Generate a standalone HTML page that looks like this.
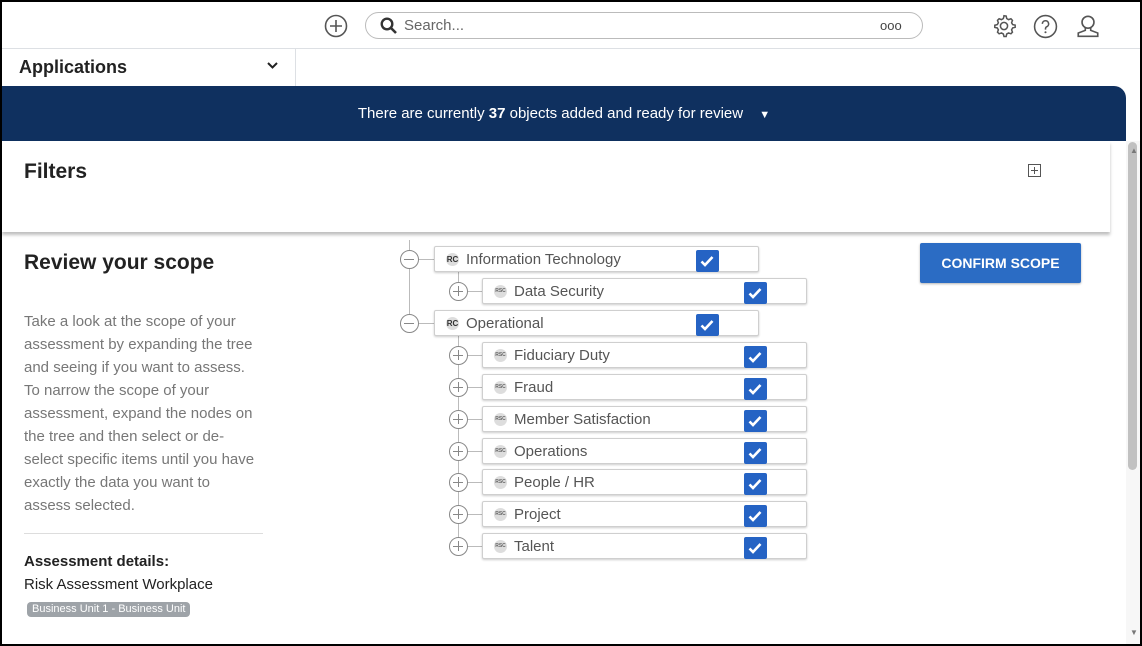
<!DOCTYPE html>
<html><head><style>
*{box-sizing:border-box;margin:0;padding:0}
body{width:1142px;height:646px;overflow:hidden;font-family:"Liberation Sans",sans-serif;background:#fff;position:relative}
.frame{position:absolute;inset:0;border:2px solid #000;pointer-events:none;z-index:10}
.abs{position:absolute}
.top{left:0;top:0;width:1142px;height:49px;border-bottom:1px solid #dde0e4}
.search{left:365px;top:12px;width:558px;height:27px;border:1px solid #bbb;border-radius:14px}
.apps{left:0;top:49px;width:296px;height:37px;border-right:1px solid #dde0e4}
.banner{left:2px;top:86px;width:1124px;height:55px;background:#0f305f;border-top-right-radius:12px;color:#fff;font-size:15px;text-align:center;line-height:55px}
.filters{left:2px;top:141px;width:1108px;height:91px;background:#fff;box-shadow:0 3px 3px rgba(0,0,0,.25)}
.sb{left:1126px;top:141px;width:14px;height:503px;background:#f7f7f7}
.thumb{left:1128px;top:142px;width:9px;height:328px;background:#c1c1c1;border-radius:5px}
.box{position:absolute;height:26px;border:1px solid #cfcfcf;border-radius:2px;background:#fff;box-shadow:0 1px 2px rgba(0,0,0,.2);font-size:15px;color:#555;line-height:25px}
.ic{position:absolute;top:6px;left:11px;width:13px;height:13px;border-radius:50%;background:#ddd;font-size:5px;color:#666;text-align:center;line-height:13px;font-weight:bold}
.ic.rc{font-size:8px;color:#333}
.lbl{position:absolute;left:31px;top:0}
.cb{position:absolute;top:3px;width:23px;height:22px;background:#2563c4;border-radius:2px}
.cb svg{position:absolute;left:4px;top:5px}
.circ{position:absolute;width:19px;height:19px;border:1.5px solid #888;border-radius:50%;background:#fff}
.circ:before{content:"";position:absolute;left:3px;top:7.5px;width:10px;height:1.5px;background:#888}
.circ.p:after{content:"";position:absolute;left:7.5px;top:3px;width:1.5px;height:10px;background:#888}
.ln{position:absolute;background:#bbb}
.p1{font-size:15px;color:#777;line-height:23px}
</style></head><body>
<div class="frame"></div>
<div class="abs top"></div>
<svg class="abs" style="left:324px;top:14px" width="24" height="24" viewBox="0 0 24 24"><circle cx="12" cy="12" r="10.5" fill="none" stroke="#555" stroke-width="1.6"/><path d="M12 6v12M6 12h12" stroke="#555" stroke-width="1.6"/></svg>
<div class="abs search"></div>
<svg class="abs" style="left:380px;top:17px" width="18" height="18" viewBox="0 0 18 18"><circle cx="7" cy="7" r="5.3" fill="none" stroke="#333" stroke-width="2.4"/><path d="M11 11l5 5" stroke="#333" stroke-width="2.6"/></svg>
<div class="abs" style="left:404px;top:17px;font-size:15px;color:#666">Search...</div>
<div class="abs" style="left:880px;top:18px;font-size:13px;color:#444">ooo</div>
<svg class="abs" style="left:991px;top:13px" width="26" height="26" viewBox="0 0 24 24"><path d="M12 2.5l2 .3.5 2.3 1.7 1 2.2-.8 1.4 1.5-.8 2.2 1 1.7 2.3.5v2l-2.3.6-1 1.7.8 2.2-1.4 1.5-2.2-.8-1.7 1-.5 2.300h-2l-.6-2.3-1.7-1-2.2.8-1.5-1.5.8-2.2-1-1.7-2.3-.5v-2l2.3-.6 1-1.7-.8-2.2 1.5-1.5 2.2.8 1.7-1 .6-2.3z" fill="none" stroke="#555" stroke-width="1.4"/><circle cx="12" cy="12" r="3.3" fill="none" stroke="#555" stroke-width="1.4"/></svg>
<svg class="abs" style="left:1033px;top:14px" width="25" height="25" viewBox="0 0 24 24"><circle cx="12" cy="12" r="10.5" fill="none" stroke="#555" stroke-width="1.5"/><path d="M9 9.5a3 3 0 1 1 4 2.8c-.8.4-1 1-1 2v.7" fill="none" stroke="#555" stroke-width="1.5"/><circle cx="12" cy="17.5" r="1" fill="#555"/></svg>
<svg class="abs" style="left:1075px;top:13px" width="26" height="26" viewBox="0 0 24 24"><circle cx="12" cy="8.5" r="5.5" fill="none" stroke="#555" stroke-width="1.5"/><path d="M9.5 13.5v2.5L3 18.5v3h18v-3l-6.5-2.5v-2.5" fill="none" stroke="#555" stroke-width="1.5"/></svg>
<div class="abs apps"></div>
<div class="abs" style="left:19px;top:57px;font-size:18px;font-weight:bold;color:#222">Applications</div>
<svg class="abs" style="left:266px;top:61px" width="13" height="10" viewBox="0 0 13 10"><path d="M2 2l4.5 4.5L11 2" fill="none" stroke="#222" stroke-width="2"/></svg>
<div class="abs banner">There are currently <b>37</b> objects added and ready for review <span style="font-size:11px;margin-left:12px">▼</span></div>
<div class="abs filters"></div>
<div class="abs" style="left:24px;top:160px;font-size:21px;font-weight:bold;color:#222">Filters</div>
<svg class="abs" style="left:1028px;top:164px" width="13" height="13" viewBox="0 0 13 13"><rect x=".5" y=".5" width="12" height="12" fill="none" stroke="#555"/><path d="M6.5 3v7M3 6.5h7" stroke="#555"/></svg>
<div class="abs sb"></div><div class="abs thumb"></div>
<div class="abs" style="left:1130px;top:146px;font-size:8px;color:#777">▲</div>
<div class="abs" style="left:1130px;top:628px;font-size:8px;color:#777">▼</div>

<div class="abs" style="left:24px;top:251px;font-size:21px;font-weight:bold;color:#222">Review your scope</div>
<div class="abs p1" style="left:24px;top:310px;width:236px">Take a look at the scope of your assessment by expanding the tree and seeing if you want to assess. To narrow the scope of your assessment, expand the nodes on the tree and then select or de-select specific items until you have exactly the data you want to assess selected.</div>
<div class="abs" style="left:24px;top:533px;width:239px;height:1px;background:#ddd"></div>
<div class="abs" style="left:24px;top:553px;font-size:15px;font-weight:bold;color:#222">Assessment details:</div>
<div class="abs" style="left:24px;top:576px;font-size:15px;color:#222">Risk Assessment Workplace</div>
<div class="abs" style="left:27px;top:602px;height:15px;padding:0 5px;border-radius:4px;background:#9ea3a8;color:#fff;font-size:11px;line-height:15px">Business Unit 1 - Business Unit</div>

<div class="abs" style="left:920px;top:243px;width:161px;height:40px;background:#2b6cc4;border-radius:2px;color:#fff;font-size:14px;font-weight:bold;text-align:center;line-height:40px;box-shadow:0 1px 2px rgba(0,0,0,.3)">CONFIRM SCOPE</div>

<div class="ln" style="left:409px;top:240px;width:1px;height:83px"></div>
<div class="ln" style="left:458px;top:272px;width:1px;height:20px"></div>
<div class="ln" style="left:458px;top:336px;width:1px;height:210px"></div>

<div id="tree"></div>
<script>
var rows=[["Information Technology",259,0],["Data Security",291,1],["Operational",323,0],["Fiduciary Duty",355,1],["Fraud",387,1],["Member Satisfaction",419,1],["Operations",451,1],["People / HR",482,1],["Project",514,1],["Talent",546,1]];
var h="";
rows.forEach(function(r){var c=r[2],y=r[1];var cx=c?458:409,bx=c?482:434;
h+='<div class="ln" style="left:'+cx+'px;top:'+y+'px;width:'+(bx-cx)+'px;height:1px"></div>';
h+='<div class="circ'+(c?' p':'')+'" style="left:'+(cx-9)+'px;top:'+(y-9)+'px"></div>';
h+='<div class="box" style="left:'+bx+'px;top:'+(y-13)+'px;width:325px"><div class="ic'+(c?'':' rc')+'">'+(c?'RSC':'RC')+'</div><div class="lbl">'+r[0]+'</div><div class="cb" style="left:261px"><svg width="14" height="12" viewBox="0 0 14 12"><path d="M1.5 6.5l3.5 3.5 7.5-8" fill="none" stroke="#fff" stroke-width="2.6"/></svg></div></div>';});
document.getElementById("tree").innerHTML=h;
</script>
</body></html>
